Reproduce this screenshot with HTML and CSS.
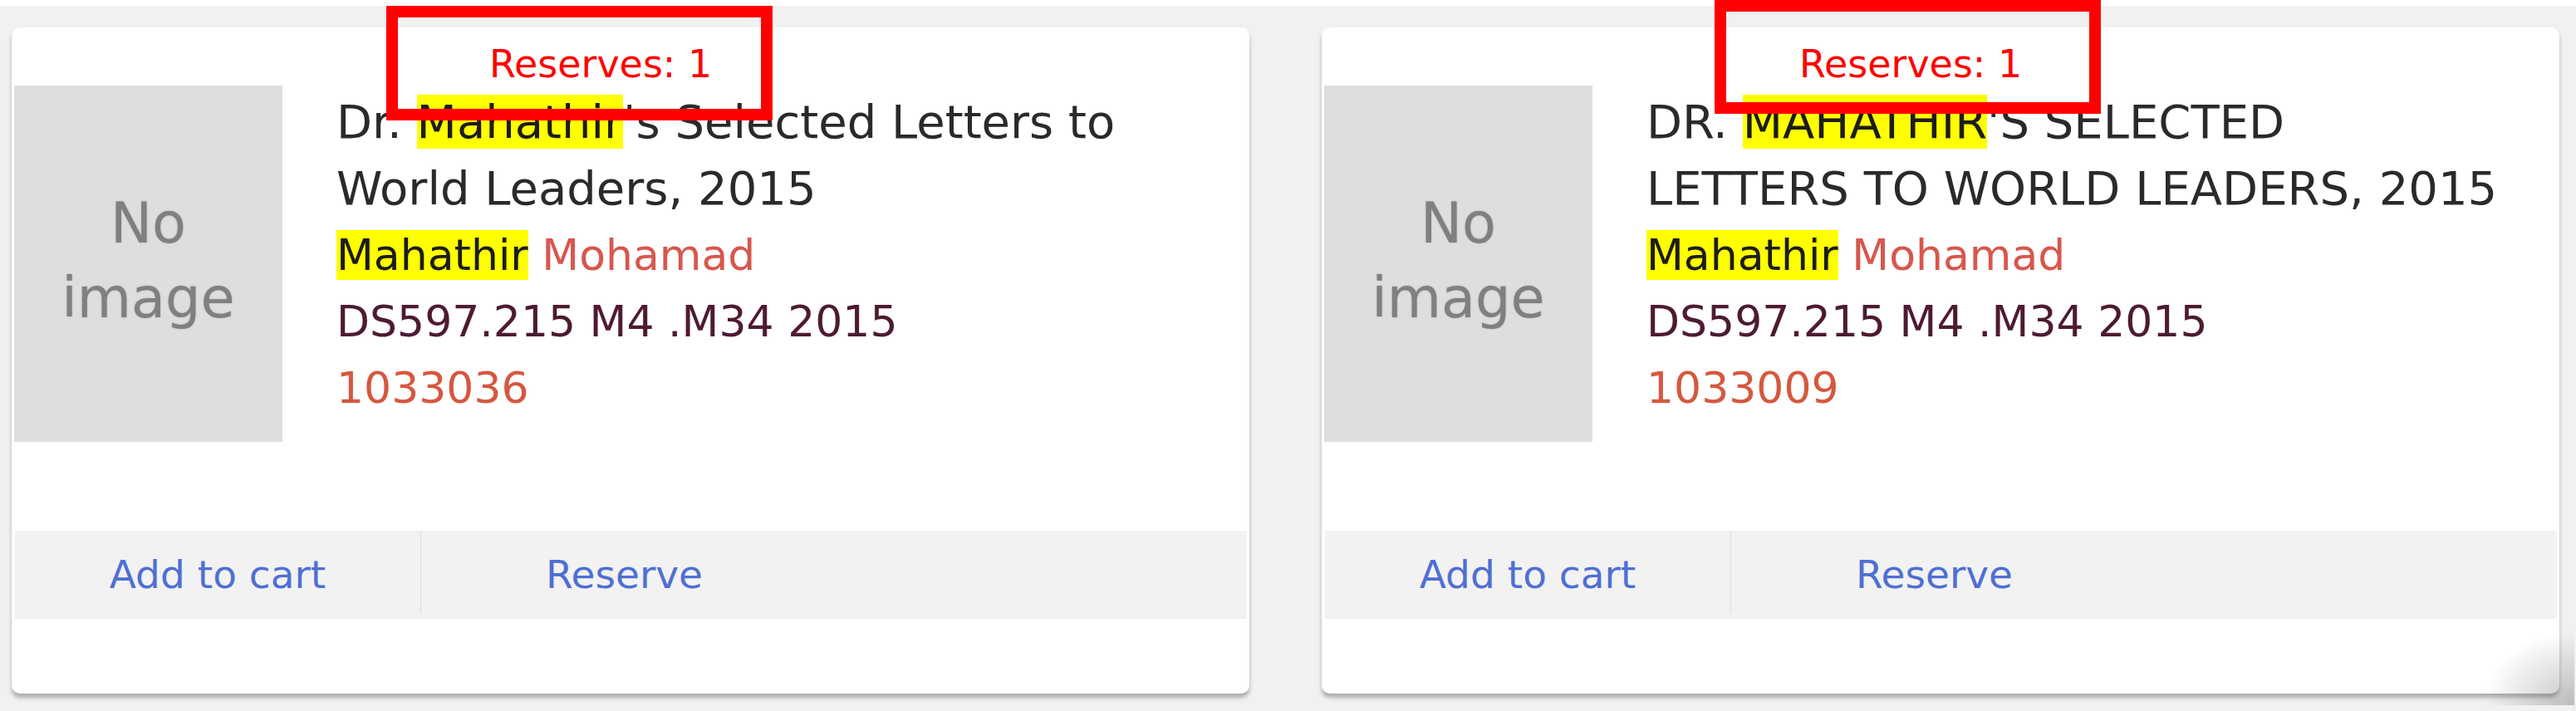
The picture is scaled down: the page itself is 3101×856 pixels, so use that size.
FILE: index.html
```html
<!DOCTYPE html>
<html lang="en">
<head>
<meta charset="utf-8">
<title>Search results</title>
<link rel="stylesheet" href="styles.css">
</head>
<body>
<div class="topstrip"></div>
<div class="cards">
  <div class="card">
    <div class="reserves">Reserves: 1</div>
    <div class="card-body">
      <div class="thumb"><span>No</span><span>image</span></div>
      <div class="info">
        <div class="title">Dr. <mark>Mahathir</mark>'s Selected Letters to World Leaders, 2015</div>
        <div class="author"><mark>Mahathir</mark> Mohamad</div>
        <div class="callno">DS597.215 M4 .M34 2015</div>
        <div class="barcode">1033036</div>
      </div>
    </div>
    <div class="actions">
      <a class="action first">Add to cart</a>
      <a class="action">Reserve</a>
    </div>
    <div class="annot annot-1"></div>
  </div>
  <div class="card">
    <div class="reserves">Reserves: 1</div>
    <div class="card-body">
      <div class="thumb"><span>No</span><span>image</span></div>
      <div class="info">
        <div class="title">DR. <mark>MAHATHIR</mark>'S SELECTED <span class="keep">LETTERS TO WORLD LEADERS, 2015</span></div>
        <div class="author"><mark>Mahathir</mark> Mohamad</div>
        <div class="callno">DS597.215 M4 .M34 2015</div>
        <div class="barcode">1033009</div>
      </div>
    </div>
    <div class="actions">
      <a class="action first">Add to cart</a>
      <a class="action">Reserve</a>
    </div>
    <div class="annot annot-2"></div>
    <div class="corner-shade"></div>
  </div>
</div>
</body>
</html>
```
FILE: styles.css
```css
html, body {
  margin: 0;
  padding: 0;
}
body {
  background: #f1f1f1;
  font-family: "DejaVu Sans", Verdana, sans-serif;
  width: 3101px;
  height: 856px;
  overflow: hidden;
}
.topstrip {
  height: 7px;
  background: #ffffff;
}
.cards {
  display: flex;
  gap: 87px;
  padding: 26px 20px 0 14px;
}
.card {
  position: relative;
  width: 1491px;
  height: 802px;
  background: #ffffff;
  border-radius: 10px;
  box-shadow: 0 5px 5px rgba(0, 0, 0, 0.28);
  display: flex;
  flex-direction: column;
}
.reserves {
  height: 70px;
  box-sizing: border-box;
  padding: 14px 0 0 575px;
  line-height: 60px;
  font-size: 46px;
  color: #ff0000;
  white-space: nowrap;
}
.card-body {
  display: flex;
  height: 536px;
  padding-left: 3px;
}
.thumb {
  flex: none;
  width: 323px;
  height: 429px;
  box-sizing: border-box;
  padding-bottom: 7px;
  background: #dedede;
  color: #808080;
  font-size: 67px;
  line-height: 90px;
  display: flex;
  flex-direction: column;
  align-items: center;
  justify-content: center;
  text-shadow: 0 0 2px rgba(128, 128, 128, 0.5);
}
.info {
  margin-left: 65px;
  padding-top: 4px;
  width: 1060px;
  font-size: 52px;
  line-height: 80px;
  color: #2a2a2a;
}
.title {
  font-size: 56px;
}
.keep {
  white-space: nowrap;
}
mark {
  background: #ffff00;
  color: #1c1c1c;
}
.author {
  color: #d9564c;
}
.callno {
  color: #4e1a32;
}
.barcode {
  color: #d5583f;
}
.actions {
  display: flex;
  height: 106px;
  margin: 0 3px 0 4px;
  background: #f2f2f2;
}
.action {
  width: 489px;
  text-align: center;
  line-height: 106px;
  font-size: 47px;
  color: #4f6fd3;
  cursor: pointer;
}
.action.first {
  border-right: 1px solid #dcdcdc;
  box-sizing: border-box;
  height: 100px;
}
.annot {
  position: absolute;
  border: 14px solid #ff0000;
  box-sizing: border-box;
  width: 466px;
  height: 138px;
}
.annot-1 {
  left: 451px;
  top: -26px;
  width: 465px;
}
.annot-2 {
  left: 473px;
  top: -33px;
  height: 137px;
  width: 465px;
}
.corner-shade {
  position: absolute;
  right: -18px;
  bottom: -14px;
  width: 110px;
  height: 90px;
  background: radial-gradient(ellipse at 100% 100%, rgba(90, 90, 90, 0.35), rgba(90, 90, 90, 0) 70%);
  pointer-events: none;
}
```
